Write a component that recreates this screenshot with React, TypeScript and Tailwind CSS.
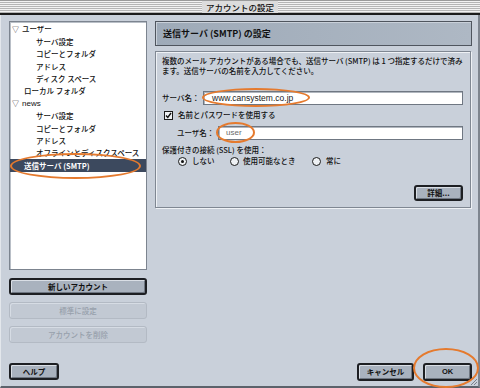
import React from "react";

const JP = "font-['Noto_Sans_CJK_JP','Noto_Sans',sans-serif]";

function Btn({ children, className = "", disabled = false }: { children: React.ReactNode; className?: string; disabled?: boolean }) {
  return disabled ? (
    <div className={`flex items-center justify-center rounded-[3px] border border-[#b3bac4] bg-[#c2c9d3] text-[7.5px] text-[#97a0ab] shadow-[inset_1px_1px_0_#d6dce4] ${className}`}>
      {children}
    </div>
  ) : (
    <div className={`flex items-center justify-center rounded-[3px] border-2 border-[#1d1f23] bg-[#a9b2be] text-[7.5px] font-bold text-[#111] shadow-[inset_1px_1px_0_#d9dee5,inset_-1px_-1px_0_#6f7782] ${className}`}>
      {children}
    </div>
  );
}

function Radio({ checked }: { checked?: boolean }) {
  return (
    <span className="flex h-[9px] w-[9px] items-center justify-center rounded-full border-[1.5px] border-[#1a1a1a] bg-[#eef1f4]">
      {checked && <span className="h-[3px] w-[3px] rounded-full bg-[#111]" />}
    </span>
  );
}

export default function App() {
  const tree: { t: string; x: number; sel?: boolean; tri?: boolean; latin?: boolean }[] = [
    { t: "ユーザー", x: 12, tri: true },
    { t: "サーバ設定", x: 36 },
    { t: "コピーとフォルダ", x: 36 },
    { t: "アドレス", x: 36 },
    { t: "ディスク スペース", x: 36 },
    { t: "ローカル フォルダ", x: 24 },
    { t: "news", x: 12, tri: true, latin: true },
    { t: "サーバ設定", x: 36 },
    { t: "コピーとフォルダ", x: 36 },
    { t: "アドレス", x: 36 },
    { t: "オフラインとディスクスペース", x: 36 },
    { t: "送信サーバ (SMTP)", x: 24, sel: true },
  ];
  return (
    <div className={`relative flex h-[388px] w-[480px] flex-col overflow-hidden bg-[#c9d0da] font-medium ${JP}`}>
      {/* title bar */}
      <div className="relative flex h-[13px] items-center justify-center border-t border-[#9a9a9a] bg-[repeating-linear-gradient(to_bottom,#f2f2f2_0px,#f2f2f2_1px,#b5b5b5_1px,#b5b5b5_2px)] px-[3px]">
        <div className="flex h-[12px] w-[76px] items-center justify-center bg-[#dcdcdc] text-[8.5px] leading-none text-[#111]">
          アカウントの設定
        </div>
      </div>
      <div className="h-[2px] bg-[#1b1b1b]" />
      {/* body */}
      <div className="flex min-h-0 flex-1 border-l border-r-2 border-b-2 border-l-[#e3e7ec] border-r-[#7e858f] border-b-[#5c626b]">
        {/* left column */}
        <div className="ml-[8px] flex w-[138px] flex-col pt-[6px] pb-[6px]">
          <div className="h-[249px] border border-[#7c848f] bg-white pt-[1px] shadow-[inset_1px_1px_0_#b9bfc7]">
            {tree.map((r, i) => (
              <div
                key={i}
                className={`flex h-[12.4px] items-center text-[7.5px] leading-none ${r.sel ? "bg-[#3c495e] font-bold text-white" : "text-[#111]"}`}
                style={{ paddingLeft: r.x - 10 }}
              >
                {r.tri && <span className="mr-[3px] text-[7px] leading-none text-[#222]">▽</span>}
                <span className={r.latin ? "font-['Liberation_Sans',sans-serif] text-[8px]" : ""}>{r.t}</span>
              </div>
            ))}
          </div>
          <Btn className="mt-[8px] h-[17px]">新しいアカウント</Btn>
          <Btn disabled className="mt-[7px] h-[17px]">標準に設定</Btn>
          <Btn disabled className="mt-[7px] h-[17px]">アカウントを削除</Btn>
          <Btn className="mt-auto h-[17px] w-[50px]">ヘルプ</Btn>
        </div>
        {/* right column */}
        <div className="ml-[8px] flex w-[317px] flex-col pt-[6px] pb-[5px]">
          <div className="flex h-[25px] items-center border border-[#4f555e] bg-[linear-gradient(to_right,#9eaab8,#aeb8c4)] pl-[7px] text-[9px] font-bold text-[#111] shadow-[inset_1px_1px_0_#c9d0d9]">
            送信サーバ (SMTP) の設定
          </div>
          <div className="mt-[5px] flex h-[157px] w-[316px] flex-col border border-[#7f8792] pl-[6px] pr-[7px] pt-[4px] shadow-[inset_1px_1px_0_#eef1f5,1px_1px_0_#eef1f5]">
            <div className="text-[7.5px] leading-[10px] text-[#111]">
              <div>複数のメール アカウントがある場合でも、送信サーバ (SMTP) は 1 つ指定するだけで済み</div>
              <div>ます。送信サーバの名前を入力してください。</div>
            </div>
            <div className="mt-[15px] flex h-[14px] items-center">
              <span className="w-[41px] text-[7.5px] text-[#111]">サーバ名：</span>
              <div className="flex h-[14px] flex-1 items-center border border-[#6f7782] bg-white pl-[8px] font-['Liberation_Sans',sans-serif] text-[8.5px] font-normal text-[#222] shadow-[inset_1px_1px_0_#b0b6be]">
                www.cansystem.co.jp
              </div>
            </div>
            <div className="mt-[5px] flex h-[10px] items-center pl-[2px]">
              <span className="flex h-[9px] w-[9px] items-center justify-center border border-[#1a1a1a] bg-[#eef1f4]">
                <svg width="7" height="7" viewBox="0 0 7 7">
                  <path d="M1 3.5 L2.8 5.5 L6 1" fill="none" stroke="#111" strokeWidth="1.4" />
                </svg>
              </span>
              <span className="ml-[5px] text-[7.5px] text-[#111]">名前とパスワードを使用する</span>
            </div>
            <div className="mt-[6px] flex h-[14px] items-center pl-[15px]">
              <span className="w-[41px] text-[7.5px] text-[#111]">ユーザ名：</span>
              <div className="flex h-[14px] flex-1 items-center border border-[#6f7782] bg-white pl-[7px] font-['Liberation_Sans',sans-serif] text-[8px] font-normal text-[#6a6a6a] shadow-[inset_1px_1px_0_#b0b6be]">
                user
              </div>
            </div>
            <div className="mt-[5px] flex h-[10px] items-center text-[7.5px] text-[#111]">保護付きの接続 (SSL) を使用：</div>
            <div className="mt-[1px] flex h-[10px] items-center pl-[16px] text-[7.5px] text-[#111]">
              <Radio checked />
              <span className="ml-[5px] w-[38px]">しない</span>
              <Radio />
              <span className="ml-[4px] w-[69px]">使用可能なとき</span>
              <Radio />
              <span className="ml-[5px]">常に</span>
            </div>
            <div className="mt-[19px] flex justify-end">
              <Btn className="h-[16px] w-[49px]">詳細...</Btn>
            </div>
          </div>
          <div className="mt-auto flex justify-end gap-[9px]">
            <Btn className="h-[18px] w-[57px]">キャンセル</Btn>
            <Btn className="h-[18px] w-[49px] font-['Liberation_Sans',sans-serif]">OK</Btn>
          </div>
        </div>
      </div>
      {/* resize grip */}
      <svg className="absolute right-[2px] bottom-[2px]" width="9" height="9" viewBox="0 0 9 9">
        <path d="M8 2 L2 8 M8 5 L5 8" stroke="#7a818b" strokeWidth="1" />
      </svg>
      {/* orange annotation ellipses */}
      <div className="pointer-events-none absolute left-[10px] top-[153px] h-[26px] w-[131px] rounded-[50%] border-2 border-[#e57a2e]" />
      <div className="pointer-events-none absolute left-[202px] top-[88px] h-[19px] w-[108px] rounded-[50%] border-2 border-[#e57a2e]" />
      <div className="pointer-events-none absolute left-[216px] top-[122px] h-[21px] w-[39px] rounded-[50%] border-2 border-[#e57a2e]" />
      <div className="pointer-events-none absolute left-[413px] top-[348px] h-[40px] w-[66px] rounded-[50%] border-2 border-[#e57a2e]" />
    </div>
  );
}
